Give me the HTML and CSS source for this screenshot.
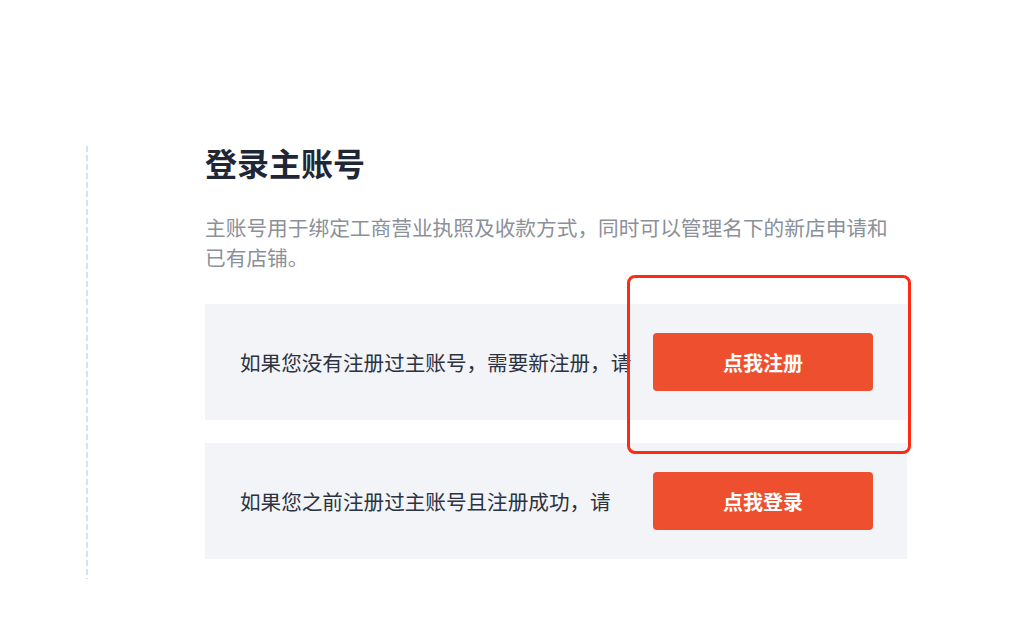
FILE: index.html
```html
<!DOCTYPE html>
<html lang="zh-CN">
<head>
<meta charset="utf-8">
<title>登录主账号</title>
<link rel="stylesheet" href="styles.css">
</head>
<body>
<div class="page">
  <section class="panel">
    <h1 class="title">登录主账号</h1>
    <p class="desc">主账号用于绑定工商营业执照及收款方式，同时可以管理名下的新店申请和已有店铺。</p>
    <div class="card">
      <span class="card-text">如果您没有注册过主账号，需要新注册，请</span>
      <button class="btn">点我注册</button>
      <div class="highlight"></div>
    </div>
    <div class="card">
      <span class="card-text">如果您之前注册过主账号且注册成功，请</span>
      <button class="btn">点我登录</button>
    </div>
  </section>
</div>
</body>
</html>
```

FILE: styles.css
```css
* { box-sizing: border-box; }
html, body {
  margin: 0;
  padding: 0;
  background: #ffffff;
  font-family: "Noto Sans CJK SC", "Noto Sans", sans-serif;
}
.page {
  padding-top: 146px;
  padding-left: 86px;
}
.panel {
  width: 821px;
  padding: 0 0 20px 119px;
  background: repeating-linear-gradient(to bottom, #d5e3f0 0 6px, transparent 6px 9px) left top / 2px 100% no-repeat;
}
.title {
  margin: 0;
  font-size: 32px;
  line-height: 32px;
  font-weight: 700;
  color: #1f2737;
}
.desc {
  margin: 34px 0 32px;
  font-size: 20.7px;
  line-height: 30px;
  color: #8b9099;
}
.card {
  position: relative;
  display: flex;
  align-items: center;
  justify-content: space-between;
  height: 116px;
  padding: 0 34px 0 35px;
  background: #f3f4f8;
}
.card + .card { margin-top: 23px; }
.card-text {
  font-size: 20.6px;
  line-height: 30px;
  color: #2b3241;
}
.btn {
  width: 220px;
  height: 58px;
  border: none;
  border-radius: 4px;
  background: #ee4f2f;
  color: #ffffff;
  font-family: inherit;
  font-size: 20px;
  font-weight: 700;
  cursor: pointer;
}
.highlight {
  position: absolute;
  z-index: 2;
  left: 422px;
  top: -29px;
  width: 284px;
  height: 179px;
  border: 3px solid #ff2a16;
  border-radius: 8px;
  pointer-events: none;
}
```
